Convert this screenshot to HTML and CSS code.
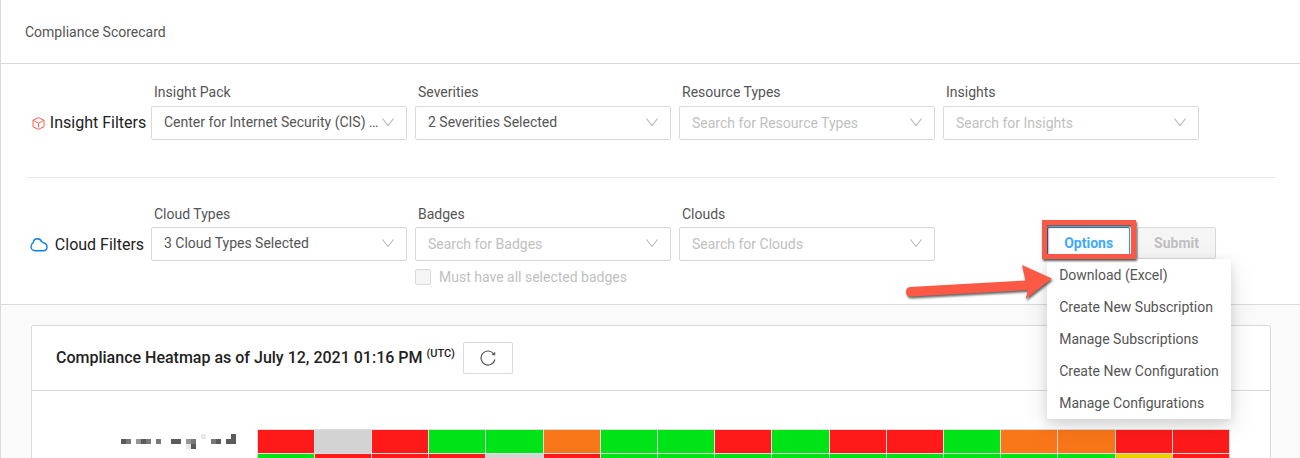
FILE: index.html
```html
<!DOCTYPE html>
<html lang="en">
<head>
<meta charset="utf-8">
<title>Compliance Scorecard</title>
<link rel="stylesheet" href="styles.css">
</head>
<body>
<svg class="sprite" aria-hidden="true">
  <symbol id="chevron" viewBox="0 0 12 8"><path d="M.5.5 6 7.500 11.500.5" fill="none" stroke="currentColor" stroke-width="1.1"/></symbol>
</svg>
<header class="page-header"><h1 class="page-title">Compliance Scorecard</h1></header>
<main>
  <form class="filters">
    <section class="filter-row">
      <h2 class="filter-title">
        <svg class="icon-cube" viewBox="0 0 13 13" fill="none" stroke="#ff5f4d" stroke-linejoin="round"><path d="M6.500.7 12 3.200V9.800L6.500 12.300 1 9.800V3.200ZM3 4.400 6.500 6.200 10 4.400M6.500 6.200V10.500M1 3.200 3 4.400M12 3.200 10 4.400"/></svg>
        Insight Filters
      </h2>
      <div class="field">
        <label class="field-label" for="pack">Insight Pack</label>
        <div class="select-box"><select id="pack" class="select"><option>Center for Internet Security (CIS) Benchmarks</option></select><svg class="chevron"><use href="#chevron"/></svg></div>
      </div>
      <div class="field">
        <label class="field-label" for="severities">Severities</label>
        <div class="select-box"><select id="severities" class="select"><option>2 Severities Selected</option></select><svg class="chevron"><use href="#chevron"/></svg></div>
      </div>
      <div class="field">
        <label class="field-label" for="resources">Resource Types</label>
        <div class="select-box"><select id="resources" class="select select-empty"><option>Search for Resource Types</option></select><svg class="chevron"><use href="#chevron"/></svg></div>
      </div>
      <div class="field">
        <label class="field-label" for="insights">Insights</label>
        <div class="select-box"><select id="insights" class="select select-empty"><option>Search for Insights</option></select><svg class="chevron"><use href="#chevron"/></svg></div>
      </div>
    </section>
    <section class="filter-row filter-row-cloud">
      <h2 class="filter-title">
        <svg class="icon-cloud" viewBox="0 0 18 14" fill="none" stroke="#0b7fe8" stroke-width="1.400"><path d="M5.300 12.700C2.800 12.700 1 10.900 1 8.700 1 6.800 2 5.500 3.200 4.500 3.500 2.400 5.200.8 7.400.8 9.500.8 11 2 11.600 3.800L13.300 4.700C15.500 5.200 17 6.500 17 8.700 17 11 15.400 12.700 13 12.700Z"/></svg>
        Cloud Filters
      </h2>
      <div class="field">
        <label class="field-label" for="types">Cloud Types</label>
        <div class="select-box"><select id="types" class="select"><option>3 Cloud Types Selected</option></select><svg class="chevron"><use href="#chevron"/></svg></div>
      </div>
      <div class="field">
        <label class="field-label" for="badges">Badges</label>
        <div class="select-box"><select id="badges" class="select select-empty"><option>Search for Badges</option></select><svg class="chevron"><use href="#chevron"/></svg></div>
        <label class="check"><input class="check-box" type="checkbox" disabled>Must have all selected badges</label>
      </div>
      <div class="field">
        <label class="field-label" for="clouds">Clouds</label>
        <div class="select-box"><select id="clouds" class="select select-empty"><option>Search for Clouds</option></select><svg class="chevron"><use href="#chevron"/></svg></div>
      </div>
      <div class="actions">
        <div class="options">
          <button class="button button-options" type="button" aria-haspopup="true" aria-expanded="true">Options</button>
          <ul class="menu">
            <li><button class="menu-item" type="button">Download (Excel)</button></li>
            <li><button class="menu-item" type="button">Create New Subscription</button></li>
            <li><button class="menu-item" type="button">Manage Subscriptions</button></li>
            <li><button class="menu-item" type="button">Create New Configuration</button></li>
            <li><button class="menu-item" type="button">Manage Configurations</button></li>
          </ul>
          <span class="highlight"></span>
          <svg class="arrow" viewBox="0 0 150 38"><path d="M5 23 120.500 16.500 117 1 147 14.500 120.500 35 123 26 6 32.500Q1 32.500 1 28 1 23.500 5 23Z" fill="#fc5846"/></svg>
        </div>
        <button class="button" type="submit" disabled>Submit</button>
      </div>
    </section>
  </form>
  <section class="card">
    <div class="card-header">
      <h2 class="card-title">Compliance Heatmap as of July 12, 2021 01:16 PM <sup class="zone">(UTC)</sup></h2>
      <button class="refresh" type="button" aria-label="Refresh"><svg class="icon-refresh" viewBox="0 0 16 16"><path d="M13.800 4A7 7 0 1 0 14.900 9.500" fill="none" stroke="#555" stroke-width="1.200"/><path d="M15.200 1.800V5.600L11.600 4.800Z" fill="#555"/></svg></button>
    </div>
    <table class="heatmap">
      <tbody>
        <tr>
          <th class="row-name" scope="row"><svg class="redacted" viewBox="0 0 23 3" shape-rendering="crispEdges"><path d="M0 1h1v1H0zM4 1h1v1H4zM10 1h2v1h-2zM14 2h1v1h-1zM19 1h1v1h-1zM21 1h1V0h1v2h-2z" fill="#5b5b5b"/><path d="M1 1h1v1H1zM5 1h1v1H5zM7 1h1v1H7zM14 1h1v1h-1zM18 1h1v1h-1z" fill="#797979"/><path d="M3 1h1v1H3zM13 1h1v1h-1z" fill="#959595"/><path d="M13 2h1v1h-1zM16 0h1v1h-1z" fill="#e8e8e8"/></svg></th>
          <td class="red"></td><td class="gray"></td><td class="red"></td><td class="green"></td><td class="green"></td><td class="orange"></td><td class="green"></td><td class="green"></td><td class="red"></td><td class="green"></td><td class="red"></td><td class="red"></td><td class="green"></td><td class="orange"></td><td class="orange"></td><td class="red"></td><td class="red"></td>
        </tr>
        <tr>
          <th class="row-name" scope="row"></th>
          <td class="green"></td><td class="red"></td><td class="red"></td><td class="red"></td><td class="gray"></td><td class="red"></td><td class="green"></td><td class="green"></td><td class="green"></td><td class="green"></td><td class="green"></td><td class="green"></td><td class="green"></td><td class="green"></td><td class="green"></td><td class="yellow"></td><td class="red"></td>
        </tr>
      </tbody>
    </table>
  </section>
</main>
</body>
</html>
```
FILE: styles.css
```css
* { box-sizing: border-box; }
html { overflow: hidden; }
body {
  margin: 0;
  min-height: 100vh;
  border-left: 1px solid #d9d9d9;
  background: #fafafa;
  color: #555;
  font: 14px/20px Roboto, sans-serif;
}
h1, h2, ul { margin: 0; padding: 0; font: inherit; list-style: none; }
button, select { font: inherit; color: inherit; }
.sprite { display: none; }

.page-header {
  padding: 22px 24px 21px;
  border-bottom: 1px solid #d9d9d9;
  background: #fff;
}

.filters {
  padding: 0 25px 0 26px;
  border-bottom: 1px solid #d9d9d9;
  background: #fff;
}
.filter-row {
  display: flex;
  align-items: flex-start;
  gap: 8px;
  padding: 18px 0 37px;
}
.filter-row-cloud {
  padding: 26px 0 19px;
  border-top: 1px solid #e6e6e6;
}
.filter-title {
  display: flex;
  flex: 0 0 124px;
  align-items: center;
  justify-content: center;
  gap: 5px;
  height: 34px;
  margin: 24px -8px 0 0;
  color: #222;
  font-size: 16px;
  white-space: nowrap;
}
.filter-row-cloud .filter-title { gap: 7px; padding-right: 4px; }
.icon-cube { width: 13px; height: 13px; }
.icon-cloud { width: 18px; height: 14px; }

.field { flex: 0 1 256px; min-width: 0; }
.field-label { display: block; margin-bottom: 4px; padding-left: 3px; }
.filter-row-cloud .field-label { margin-bottom: 3px; }
.select-box { position: relative; }
.select {
  display: block;
  width: 100%;
  height: 34px;
  padding: 0 27px 2px 12px;
  border: 1px solid #d9d9d9;
  border-radius: 2px;
  background: #fff;
  appearance: none;
  text-overflow: ellipsis;
}
.select-empty { padding-bottom: 0; color: #bfbfbf; }
.chevron {
  position: absolute;
  top: 12px;
  right: 13px;
  width: 12px;
  height: 8px;
  color: #b5b5b5;
  pointer-events: none;
}
.check {
  display: flex;
  align-items: center;
  gap: 8px;
  height: 16px;
  margin-top: 8px;
  color: #bfbfbf;
}
.check-box {
  width: 16px;
  height: 16px;
  margin: 0;
  border: 1px solid #d9d9d9;
  border-radius: 2px;
  background: #f5f5f5;
  appearance: none;
}

.actions {
  display: flex;
  gap: 7px;
  margin: 23px 59px 0 auto;
}
.options { position: relative; }
.button {
  height: 32px;
  padding: 0 16px;
  border: 1px solid #d9d9d9;
  border-radius: 2px;
  background: #f5f5f5;
  color: #bfbfbf;
  font-weight: 700;
}
.button-options {
  border-color: #2f9bf5;
  background: #fff;
  color: #40a9ff;
}
.menu {
  position: absolute;
  z-index: 1;
  top: 32px;
  left: 0;
  border-radius: 2px;
  background: #fff;
  box-shadow: 0 9px 28px rgba(0, 0, 0, .1), 0 4px 12px rgba(0, 0, 0, .12);
}
.menu-item {
  display: block;
  width: 100%;
  height: 32px;
  padding: 0 12px;
  border: 0;
  background: none;
  text-align: left;
  white-space: nowrap;
}
.highlight {
  position: absolute;
  z-index: 2;
  inset: -7px -6px 0 -5px;
  border: 5px solid #fc5846;
  filter: drop-shadow(1px 2px 1px rgba(0, 0, 0, .65));
  pointer-events: none;
}
.arrow {
  position: absolute;
  z-index: 2;
  top: 37px;
  right: 75px;
  width: 150px;
  height: 38px;
  filter: drop-shadow(1px 2px 1px rgba(0, 0, 0, .6));
  pointer-events: none;
}

.card {
  margin: 20px 29px 0 30px;
  border: 1px solid #d9d9d9;
  border-radius: 2px;
  background: #fff;
}
.card-header {
  display: flex;
  align-items: center;
  gap: 8px;
  padding: 16px 24px;
  border-bottom: 1px solid #d9d9d9;
}
.card-title { color: #222; font-size: 16px; font-weight: 500; }
.zone { font-size: 11px; line-height: 0; }
.refresh {
  display: grid;
  place-items: center;
  width: 50px;
  height: 32px;
  padding: 0;
  border: 1px solid #d9d9d9;
  border-radius: 2px;
  background: #fff;
}
.icon-refresh { width: 16px; height: 16px; }

.heatmap {
  width: calc(100% - 40px);
  margin-top: 38px;
  border-collapse: collapse;
  table-layout: fixed;
}
.heatmap td { height: 24px; padding: 0; border: 1px solid #dcdcdc; }
.row-name { width: 225px; padding: 0 21px 0 0; line-height: 0; text-align: right; }
.redacted { width: 115px; height: 15px; }
.red { background: #ff1a1a; }
.green { background: #00e317; }
.orange { background: #fa7719; }
.yellow { background: #ebd000; }
.gray { background: #d3d3d3; }
```
